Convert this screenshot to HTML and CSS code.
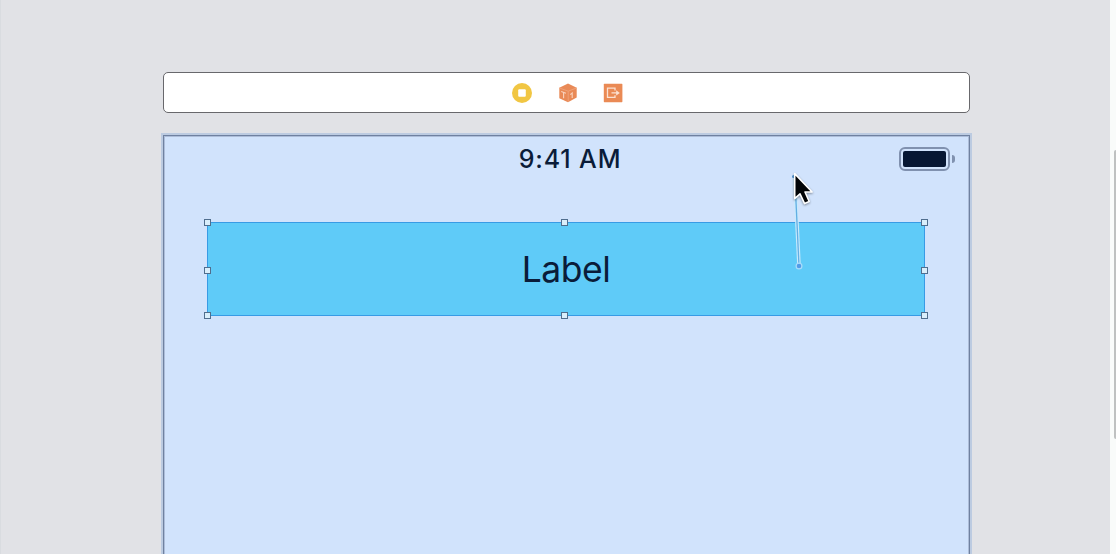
FILE: index.html
```html
<!DOCTYPE html>
<html lang="en">
<head>
<meta charset="utf-8">
<title>Storyboard</title>
<link rel="stylesheet" href="styles.css">
</head>
<body>
<div class="editor">
  <main class="canvas">
    <div class="dock">
      <svg class="dock-icon" viewBox="0 0 20 20"><circle cx="10" cy="10" r="10" fill="#f1c643"/><rect x="6.2" y="6.2" width="7.6" height="7.6" rx="1" fill="#fff"/></svg>
      <svg class="dock-icon" viewBox="0 0 20 20"><path d="M10 .6 18.7 4.8V14.5L10 19.2 1.3 15.2V4.8Z" fill="#e98a57"/><path d="M1.5 5 10.2 8.2 18.5 5M10.2 8.2V19" fill="none" stroke="#efa47b" stroke-width=".9"/><path d="M3.2 8.6 8 10.2M5.6 9.4V15.2M12.3 11.6 14.2 10V15" fill="none" stroke="#f9d3be" stroke-width="1.1"/></svg>
      <svg class="dock-icon" viewBox="0 0 20 20"><rect x=".8" y=".8" width="18.6" height="18.4" rx=".6" fill="#ea8a55"/><path d="M12 7.5V5.2H4.5V14.4H12V12.3M8.5 9.9H14" fill="none" stroke="#fbe1d2" stroke-width="1.3"/><path d="M13.2 7.3 16.8 9.9 13.2 12.5Z" fill="#fbe1d2"/></svg>
    </div>
    <section class="scene">
      <header class="status">
        <span class="time">9:41 AM</span>
        <span class="battery"><span class="battery-shell"><span class="battery-fill"></span></span><span class="battery-cap"></span></span>
      </header>
      <div class="label-view">
        <span class="label-text">Label</span>
        <i class="handle top left"></i><i class="handle top center"></i><i class="handle top right"></i>
        <i class="handle middle left"></i><i class="handle middle right"></i>
        <i class="handle bottom left"></i><i class="handle bottom center"></i><i class="handle bottom right"></i>
      </div>
    </section>
    <svg class="drag" viewBox="0 0 50 110">
      <path d="M14.8 12 19 102" stroke="#c8eafc" stroke-width="3.6"/>
      <path d="M14.8 12 19 102" stroke="#62aee4" stroke-width="1.3"/>
      <circle cx="13.6" cy="12.5" r="1.6" fill="#4b91cf"/>
      <circle cx="19" cy="102" r="2.9" fill="#529be8" stroke="#a9dcfa" stroke-width="1.2"/>
      <path class="pointer" d="M14.7 9.6V34.6L20 29.8 24.6 39.6 29.2 37.5 25 28H32.1Z" fill="#020406" stroke="#fff" stroke-width="1.6" stroke-linejoin="round"/>
    </svg>
  </main>
  <aside class="scroll-track"><div class="scroll-thumb"></div></aside>
</div>
</body>
</html>
```
FILE: styles.css
```css
* { box-sizing: border-box; }
body { margin: 0; overflow: hidden; font-family: Inter, "Liberation Sans", sans-serif; color: #0a1c39; }
.editor { display: flex; width: 1116px; height: 554px; }
.canvas {
  position: relative;
  display: flex;
  flex: 1;
  flex-direction: column;
  gap: 22px;
  padding: 72px 0 0 162px;
  overflow: hidden;
  background: #e1e2e6;
  border-left: 1px solid #d9dce0;
}
.dock {
  display: flex;
  align-items: center;
  justify-content: center;
  gap: 25.6px;
  width: 807px;
  height: 41px;
  flex: none;
  padding-left: 2px;
  background: #fff;
  border: 1px solid #68686c;
  border-radius: 5px;
}
.dock-icon { width: 20px; height: 20px; }
.scene {
  width: 807px;
  height: 430px;
  flex: none;
  padding: 0 44px;
  background: #d1e3fc;
  border: 1px solid #6f81a0;
  box-shadow: 0 0 0 2px #bccbe1, inset 0 0 0 1px #adbdd8;
}
.status { position: relative; display: flex; align-items: center; justify-content: center; height: 46px; padding-left: 7px; }
.time { font-size: 25px; font-weight: 500; line-height: 46px; letter-spacing: .85px; }
.battery { position: absolute; right: -30px; top: 11px; display: flex; align-items: center; gap: 2px; }
.battery-shell { width: 51px; height: 24px; padding: 2px; border: 2px solid #8091af; border-radius: 6px; }
.battery-fill { display: block; width: 43px; height: 16px; background: #071733; border-radius: 2px; }
.battery-cap { width: 3px; height: 8px; background: #8091af; border-radius: 0 4px 4px 0; }
.label-view {
  position: relative;
  display: flex;
  align-items: center;
  justify-content: center;
  width: 718px;
  height: 94px;
  margin-top: 40px;
  margin-left: -1px;
  padding-top: 2px;
  background: #5fcbf8;
  border: 1px solid #389be5;
}
.label-text { font-size: 35.5px; line-height: 44px; letter-spacing: -.5px; }
.handle { position: absolute; width: 7px; height: 7px; background: #d9eefb; border: 1px solid #506e8e; }
.top { top: -4px; }
.middle { top: 44px; }
.bottom { bottom: -4px; }
.left { left: -4px; }
.center { left: 353px; }
.right { right: -4px; }
.drag { position: absolute; left: 779px; top: 164px; width: 50px; height: 110px; }
.pointer { filter: drop-shadow(0 1px 1px rgba(0, 0, 0, .4)); }
.scroll-track { width: 6px; padding: 150px 0 0 4px; background: #f9fbfa; }
.scroll-thumb { height: 289px; background: #bfc1c1; border-radius: 3px 0 0 3px; }
```
